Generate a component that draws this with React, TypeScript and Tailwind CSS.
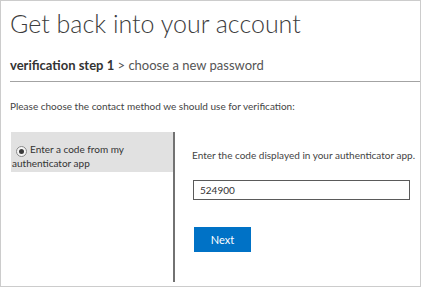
import React from 'react';

const Radio: React.FC = () => (
  <span className="inline-flex items-center justify-center w-[11px] h-[11px] rounded-full border border-[#8a8a8a] bg-[#f5f5f5] align-[-1px] mr-[3px] ml-[4px]">
    <span className="w-[5px] h-[5px] rounded-full bg-[#3a3a3a]" />
  </span>
);

export default function App() {
  return (
    <div className="w-[421px] h-[287px] border border-[#cccccc] bg-white flex flex-col font-['Segoe_UI','Lato','Open_Sans',sans-serif] text-[#333]">
      {/* Title */}
      <h1 className="mt-[7px] ml-[9px] text-[25px] leading-[30px] font-light text-[#3c3c3c]">
        Get back into your account
      </h1>

      {/* Steps */}
      <div className="mt-[19px] ml-[9px] pb-[8px] border-b border-[#a3a3a3] text-[13px] leading-[16px]">
        <span className="font-bold text-[#333]">verification step 1</span>
        <span className="text-[#555]"> &gt; choose a new password</span>
      </div>

      <p className="mt-[18px] ml-[9px] text-[10px] leading-[12px] text-[#444]">
        Please choose the contact method we should use for verification:
      </p>

      {/* Methods + form */}
      <div className="flex mt-[20px] ml-[9px] h-[150px]">
        <div className="w-[162px] ml-[1px]">
          <div className="h-[40px] bg-[#e1e1e1] pt-[11px] pl-[1px] text-[10px] leading-[13.5px] text-[#333]">
            <Radio />
            Enter a code from my authenticator app
          </div>
        </div>
        <div className="w-[2px] bg-[#727272]" />
        <div className="pl-[17px] pt-[17px] flex flex-col items-start">
          <p className="text-[10px] leading-[12px] text-[#444]">
            Enter the code displayed in your authenticator app.
          </p>
          <input
            readOnly
            value="524900"
            className="mt-[19px] ml-[1px] w-[217px] h-[20px] border border-[#5a5a5a] pl-[6px] text-[10px] text-[#333] outline-none"
          />
          <button className="mt-[27px] ml-[2px] w-[57px] h-[25px] bg-[#0072c6] text-white text-[11px] leading-[25px]">
            Next
          </button>
        </div>
      </div>
    </div>
  );
}
